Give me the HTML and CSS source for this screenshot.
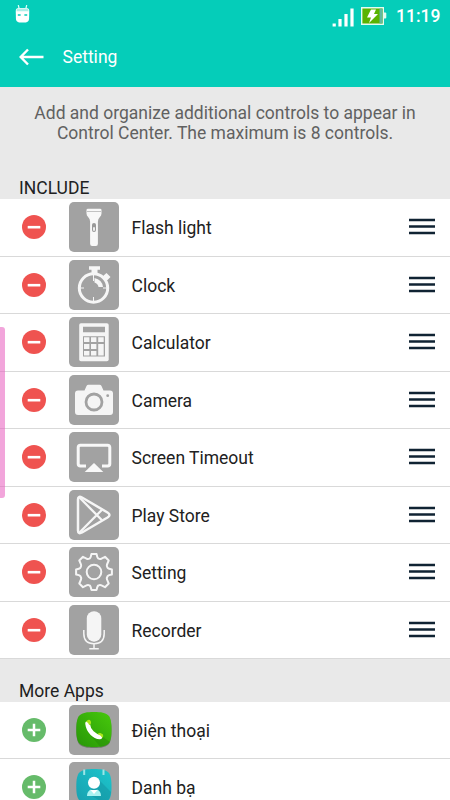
FILE: index.html
```html
<!DOCTYPE html>
<html lang="en">
<head>
<meta charset="utf-8">
<meta name="viewport" content="width=device-width, initial-scale=1">
<title>Setting</title>
<link rel="stylesheet" href="styles.css">
</head>
<body>
<svg class="defs" aria-hidden="true">
  <symbol id="minus" viewBox="0 0 24 24"><circle cx="12" cy="12" r="12" fill="#ef5350"/><path d="M5.700 12.200h12.600" stroke="#fff" stroke-width="2.600"/></symbol>
  <symbol id="plus" viewBox="0 0 24 24"><circle cx="12" cy="12" r="12" fill="#66bb6a"/><path d="M5.700 12h12.600M12 5.700v12.600" stroke="#fff" stroke-width="2.500"/></symbol>
  <symbol id="handle" viewBox="0 0 26 17"><path d="M0 2h26M0 8.500h26M0 15h26" stroke="#102333" stroke-width="2.300"/></symbol>
</svg>
<header class="top">
  <div class="status">
    <svg class="robot" viewBox="0 0 16 18" preserveAspectRatio="none"><path d="M3.500 0l1 4M12.500 0l-1 4" stroke="#d9fff9" stroke-width="1.300"/><path d="M.8 6Q.8 3 4 3h8q3.200 0 3.200 3l-.2 8q-.2 3-3.500 3.400h-7Q1.200 17 1 14z" fill="#fff"/><path d="M2.500 3.500h11l1.200 2.800H1.300z" fill="#adeee7"/><path d="M3 10h3M10 10h3" stroke="#05cdb9" stroke-width="1.300"/></svg>
    <svg class="signal" viewBox="0 0 22 19"><path d="M2.200 15.500v3M8 11v7.500M14 6v12.500M20 .5v18" stroke="#fff" stroke-width="3.200" /></svg>
    <svg class="battery" viewBox="0 0 26 18"><path d="M.7.700h21.600v16.600H.7z" fill="#59b300" stroke="#e4fcf1" stroke-width="1.400"/><path d="M18.500 1.600h3v14.800h-3z" fill="#62b9a2"/><path d="M23 5.500h1.300q1 0 1 1v4q0 1-1 1H23z" fill="#e4fcf1"/><path d="M10 2.500h5l-2 4.500h4L8 16l2-5.500H6z" fill="#fff"/></svg>
    <span class="time">11:19</span>
  </div>
  <div class="bar">
    <svg class="back" viewBox="0 0 25 18"><path d="M24.500 9H2M9 1.500L1.700 9 9 16.500" fill="none" stroke="#fff" stroke-width="2.400"/></svg>
    <h1>Setting</h1>
  </div>
</header>
<main>
  <p class="intro">Add and organize additional controls to appear in<br>Control Center. The maximum is 8 controls.</p>
  <h2 class="include">INCLUDE</h2>
  <ul>
    <li><svg class="toggle"><use href="#minus"/></svg>
      <svg class="tile" viewBox="0 0 50 50"><path d="M17.500 8q0-1.300 1.500-1.300h12q1.500 0 1.500 1.300v3.500q0 2-1.800 3.800-1.800 1.700-1.800 4.500v22q0 2.200-2 2.200h-3.800q-2 0-2-2.200v-22q0-2.800-1.800-4.500-1.800-1.800-1.800-3.800z" fill="#f8f8f8"/><path d="M18 9.500h14" stroke="#aaa" stroke-width=".7"/><rect x="23" y="21" width="4" height="9" rx="2" fill="#999"/><rect x="24" y="25" width="2" height="4" rx="1" fill="#eee"/></svg>
      <span class="name">Flash light</span><svg class="handle"><use href="#handle"/></svg></li>
    <li><svg class="toggle"><use href="#minus"/></svg>
      <svg class="tile" viewBox="0 0 50 50"><circle cx="24.500" cy="28" r="14.200" fill="none" stroke="#f6f6f6" stroke-width="3"/><path d="M20 6.300h11v3.500h-2.500v4h-6v-4H20zM33 17l4.500-4 4 4-4.500 4.500zM25.500 18q7.500 1.500 8.500 9h-4.500q-.5-3.500-4-4.500z" fill="#f6f6f6"/><path d="M24.500 14v7M24.500 37v5M10 28h5M34 28h5" stroke="#f6f6f6" stroke-width="1"/></svg>
      <span class="name">Clock</span><svg class="handle"><use href="#handle"/></svg></li>
    <li><svg class="toggle"><use href="#minus"/></svg>
      <svg class="tile" viewBox="0 0 50 50"><rect x="10.200" y="6.200" width="29.500" height="38" rx="1.800" fill="#f5f5f5"/><path d="M14 9.700h22v5.500H14zM14 19.200h22v20.300H14z" fill="#a2a2a2"/><path d="M15 20.200h5.400v4.800H15zM22 20.200h5.400v4.800H22zM29.200 20.200h5.500v4.800h-5.500zM15 27h5.400v5H15zM22 27h5.400v5H22zM29.200 27h5.500v11.500h-5.500zM15 34h5.400v4.500H15zM22 34h5.400v4.500H22z" fill="#f5f5f5"/></svg>
      <span class="name">Calculator</span><svg class="handle"><use href="#handle"/></svg></li>
    <li><svg class="toggle"><use href="#minus"/></svg>
      <svg class="tile" viewBox="0 0 50 50"><path d="M9 15.500h6.500l2-4.500q.6-1.300 2-1.300h11q1.400 0 2 1.300l2 4.500H41q3 0 3 3V37q0 3-3 3H9q-3 0-3-3V18.500q0-3 3-3z" fill="#f5f5f5"/><circle cx="25" cy="27" r="8" fill="none" stroke="#a2a2a2" stroke-width="2.800"/><circle cx="38.700" cy="20.700" r="1.400" fill="#a2a2a2"/></svg>
      <span class="name">Camera</span><svg class="handle"><use href="#handle"/></svg></li>
    <li><svg class="toggle"><use href="#minus"/></svg>
      <svg class="tile" viewBox="0 0 50 50"><path d="M17 34h-5.500q-2.300 0-2.300-2.300V15.500q0-2.300 2.300-2.300h27q2.300 0 2.300 2.300v16.200q0 2.300-2.300 2.300H33" fill="none" stroke="#f8f8f8" stroke-width="3"/><path d="M25 31l9.300 9H15.700z" fill="#f8f8f8"/></svg>
      <span class="name">Screen Timeout</span><svg class="handle"><use href="#handle"/></svg></li>
    <li><svg class="toggle"><use href="#minus"/></svg>
      <svg class="tile" viewBox="0 0 50 50"><g fill="none" stroke="#f6f6f6" stroke-linejoin="round"><path d="M9 9.500q0-4 4-2l25.500 15q4 2.500 0 5L13 42.500q-4 2-4-2z" stroke-width="2.500"/><path d="M10.500 7.500L33 30.300M10.500 42.500L33 19.700" stroke-width="2.300"/></g></svg>
      <span class="name">Play Store</span><svg class="handle"><use href="#handle"/></svg></li>
    <li><svg class="toggle"><use href="#minus"/></svg>
      <svg class="tile" viewBox="0 0 50 50"><g transform="translate(25 25)" fill="none" stroke="#f5f5f5" stroke-width="2" stroke-linejoin="round"><path d="M-4.400-13.500Q-3.300-14-2.600-17.900H2.600Q3.300-14 4.400-13.500Q6-12.500 7.500-13.400L11-15.200L14.700-11.500L13-7.500Q12.400-6 13.500-4.400Q14-3.300 17.900-2.600V2.600Q14 3.300 13.500 4.400Q12.400 6 13 7.500L14.700 11.500L11 15.200L7.500 13.400Q6 12.500 4.400 13.500Q3.300 14 2.600 17.900H-2.600Q-3.300 14-4.400 13.500Q-6 12.500-7.500 13.400L-11 15.200L-14.700 11.500L-13 7.500Q-12.400 6-13.500 4.400Q-14 3.300-17.900 2.600V-2.600Q-14-3.300-13.500-4.400Q-12.400-6-13-7.500L-14.700-11.500L-11-15.200L-7.500-13.400Q-6-12.500-4.400-13.500z"/><circle r="7.300"/></g></svg>
      <span class="name">Setting</span><svg class="handle"><use href="#handle"/></svg></li>
    <li><svg class="toggle"><use href="#minus"/></svg>
      <svg class="tile" viewBox="0 0 50 50"><rect x="17.800" y="6.200" width="14.500" height="30.500" rx="7.200" fill="#f5f5f5"/><path d="M14.800 25v3.500q0 10.200 10.200 10.200t10.200-10.200V25M25 38.500v5M20.300 43.700h9.500" fill="none" stroke="#f5f5f5" stroke-width="1.500"/></svg>
      <span class="name">Recorder</span><svg class="handle"><use href="#handle"/></svg></li>
  </ul>
  <h2 class="more">More Apps</h2>
  <ul>
    <li><svg class="toggle"><use href="#plus"/></svg>
      <svg class="tile" viewBox="0 0 50 50"><defs><linearGradient id="green" x1="1" y1="0" x2="0" y2="1"><stop stop-color="#47c90c"/><stop offset="1" stop-color="#279607"/></linearGradient></defs><path d="M25 8c14.500 0 17.500 3 17.500 17.500S39.500 43 25 43 7.300 40 7.300 25.500 10.500 8 25 8z" fill="#6d7c68"/><path d="M25 7c14.500 0 17.500 3 17.500 17.500S39.500 42 25 42 7.300 39 7.300 24.500 10.500 7 25 7z" fill="url(#green)"/><path d="M22 31l9 10.500q7-.2 10-4.500l-7-5z" fill="#23850a" opacity=".4"/><path d="M18.500 18.500q.8 6 4.500 9.500 3.500 3.500 8 4" fill="none" stroke="#fff" stroke-width="4.600" stroke-linecap="round"/><path d="M17 16.500q2-2.500 4-1.500 1.800 2 .8 4l-1.500 1.300q-.8-2.800-3.300-3.800zM28.500 29q1.500-1.500 3-1l2.500 1.500q.8 2-.7 3.300-1.500-2.500-4.800-3.800z" fill="#abe61b"/></svg>
      <span class="name">Điện thoại</span></li>
    <li><svg class="toggle"><use href="#plus"/></svg>
      <svg class="tile" viewBox="0 0 50 50"><defs><linearGradient id="teal" x1="1" y1="0" x2="0" y2="1"><stop stop-color="#1dc6cc"/><stop offset="1" stop-color="#189faf"/></linearGradient></defs><path d="M25 7c14.500 0 17.500 3 17.500 17.500S39.500 42 25 42 7.300 39 7.300 24.500 10.500 7 25 7z" fill="url(#teal)"/><path d="M29 17l13 13q-1 9-7 11L19 32z" fill="#128a98" opacity=".4"/><path d="M15.200 7.500V13M34.500 7.500V13" stroke="#9be5e7" stroke-width="2"/><circle cx="25" cy="20.700" r="6" fill="#fff"/><path d="M18 34q0-5 4-6.500l3 3 3-3q4 1.500 4 6.500z" fill="#a9f2f1"/><path d="M21.500 28l3.500 4 3.500-4z" fill="#fff"/></svg>
      <span class="name">Danh bạ</span></li>
  </ul>
</main>
<div class="edge"></div>
</body>
</html>
```
FILE: styles.css
```css
* { box-sizing: border-box; }

body {
  margin: 0;
  height: 800px;
  overflow: hidden;
  position: relative;
  background: #e9e9e9;
  color: #212121;
  font-family: Roboto, "Noto Sans", sans-serif;
  font-size: 17.5px;
}

.defs { display: none; }

.top {
  height: 87px;
  background: #05cdb9;
  color: #fff;
}

.status {
  display: flex;
  height: 32px;
  padding: 5px 10px 0 15px;
}

.robot { width: 15px; height: 18px; }
.signal { width: 22px; height: 19px; margin: 3px 7px 0 auto; }
.battery { width: 26px; height: 18px; margin-top: 2px; }

.time {
  margin-left: 9px;
  width: 44px;
  font-size: 17.5px;
  font-weight: 500;
  line-height: 23px;
  white-space: nowrap;
}

.bar {
  display: flex;
  align-items: center;
  height: 49px;
  padding-left: 19px;
}

.back { width: 25px; height: 18px; }

.bar h1 {
  margin: 0 0 0 18.5px;
  font-size: 17.5px;
  font-weight: 400;
}

.intro {
  margin: 0;
  padding-top: 16px;
  height: 89px;
  color: #616161;
  font-size: 17.5px;
  line-height: 20.4px;
  text-align: center;
  white-space: nowrap;
}

h2 {
  margin: 0;
  padding-left: 19px;
  font-size: 17.5px;
  font-weight: 400;
  line-height: 24px;
}

.include { height: 23px; }
.more { height: 42.5px; padding-top: 19.5px; }

ul {
  margin: 0;
  padding: 0;
  list-style: none;
}

li {
  display: flex;
  align-items: center;
  height: 57.5px;
  padding: 0 15px 0 22px;
  background: #fff;
  border-bottom: 1.5px solid #d9d9d9;
}

.toggle { width: 24px; height: 24px; }

.tile {
  width: 50px;
  height: 50px;
  margin-left: 23px;
  border-radius: 5px;
  background: #a2a2a2;
}

.name {
  margin: 2px 0 0 12.5px;
}

.handle { width: 26px; height: 17px; margin: 0 0 1px auto; }

.edge {
  position: absolute;
  left: 0;
  top: 327px;
  width: 5px;
  height: 171px;
  border-radius: 0 3px 3px 0;
  background: rgba(231, 91, 190, 0.55);
}
```
